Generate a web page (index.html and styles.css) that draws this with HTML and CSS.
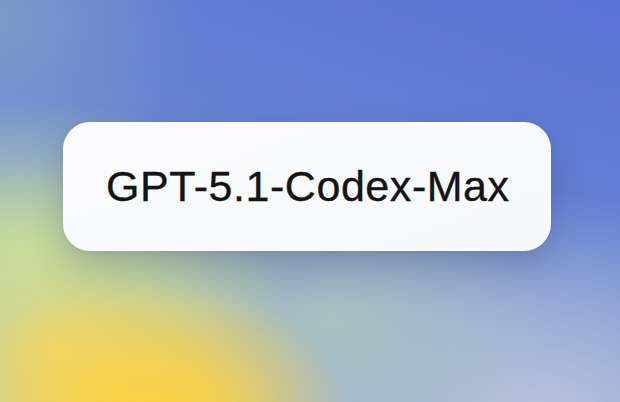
FILE: index.html
```html
<!DOCTYPE html>
<html>
<head>
<meta charset="utf-8">
<link rel="stylesheet" href="styles.css">
</head>
<body>
<div class="scene">
  <div class="card">
    <span class="label">GPT-5.1-Codex-Max</span>
  </div>
</div>
</body>
</html>
```
FILE: styles.css
```css
html, body {
  margin: 0;
  padding: 0;
}
body {
  width: 620px;
  height: 402px;
  overflow: hidden;
}
.scene {
  width: 620px;
  height: 402px;
  box-sizing: border-box;
  padding: 122px 0 0 63px;
  background:
    radial-gradient(ellipse 200px 140px at 150px 420px, rgba(255, 208, 60, 1) 0%, rgba(252, 210, 70, 0.85) 40%, rgba(250, 215, 90, 0) 100%),
    radial-gradient(ellipse 240px 190px at 60px 350px, rgba(235, 218, 110, 0.9) 0%, rgba(215, 225, 140, 0.6) 45%, rgba(200, 220, 160, 0) 100%),
    radial-gradient(ellipse 280px 150px at 20px 250px, rgba(190, 218, 165, 0.95) 0%, rgba(180, 210, 175, 0.5) 55%, rgba(170, 200, 190, 0) 100%),
    radial-gradient(ellipse 220px 160px at 330px 320px, rgba(178, 202, 190, 0.8) 0%, rgba(170, 195, 200, 0) 100%),
    radial-gradient(ellipse 300px 230px at 540px 420px, rgba(185, 195, 220, 1) 0%, rgba(175, 190, 220, 0.6) 50%, rgba(170, 185, 220, 0) 100%),
    radial-gradient(ellipse 200px 160px at 0px 20px, rgba(125, 155, 200, 1) 0%, rgba(120, 150, 205, 0.5) 55%, rgba(110, 140, 210, 0) 100%),
    linear-gradient(200deg, #5a73d6 0%, #6480d2 40%, #8fa3cc 75%, #a9b8d6 100%);
}
.card {
  width: 488px;
  height: 129px;
  box-sizing: border-box;
  padding: 40px 0 0 43px;
  border-radius: 27px;
  background: linear-gradient(160deg, #fbfbfc 0%, #f9fafc 50%, #f6f8fc 100%);
  box-shadow: 0 16px 36px rgba(40, 60, 90, 0.24), 0 2px 6px rgba(40, 60, 90, 0.08);
}
.label {
  display: block;
  font-family: "Liberation Sans", Arial, sans-serif;
  font-size: 43px;
  line-height: 49px;
  letter-spacing: 0.55px;
  color: #141414;
  -webkit-text-stroke: 0.35px #141414;
  white-space: nowrap;
}
```
